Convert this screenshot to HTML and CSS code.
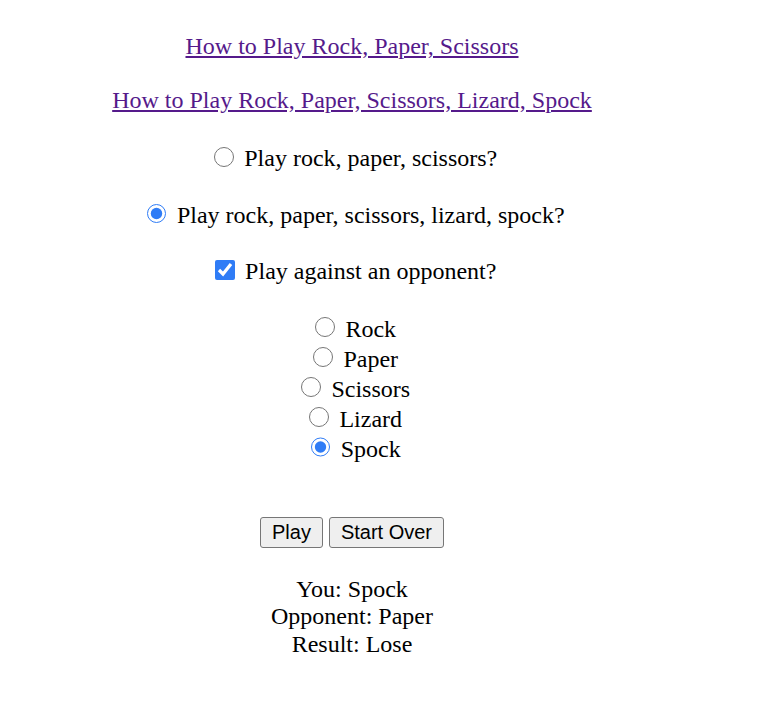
FILE: index.html
```html
<!DOCTYPE html>
<html>
<head>
<meta charset="utf-8">
<title>Rock, Paper, Scissors</title>
<link rel="stylesheet" href="styles.css">
</head>
<body>
<div class="page">
  <div class="link-row first"><a href="#rps">How to Play Rock, Paper, Scissors</a></div>
  <div class="link-row second"><a href="#rpsls">How to Play Rock, Paper, Scissors, Lizard, Spock</a></div>
  <div class="option-row"><input type="radio" name="mode" class="ctl"> Play rock, paper, scissors?</div>
  <div class="option-row"><input type="radio" name="mode" class="ctl" checked> Play rock, paper, scissors, lizard, spock?</div>
  <div class="option-row"><input type="checkbox" class="ctl" checked> Play against an opponent?</div>
  <div class="choices">
    <div class="choice"><input type="radio" name="pick" class="ctl"> Rock</div>
    <div class="choice"><input type="radio" name="pick" class="ctl"> Paper</div>
    <div class="choice"><input type="radio" name="pick" class="ctl"> Scissors</div>
    <div class="choice"><input type="radio" name="pick" class="ctl"> Lizard</div>
    <div class="choice"><input type="radio" name="pick" class="ctl" checked> Spock</div>
  </div>
  <div class="buttons"><button class="btn">Play</button> <button class="btn">Start Over</button></div>
  <div class="results">
    <div class="result-line">You: Spock</div>
    <div class="result-line">Opponent: Paper</div>
    <div class="result-line">Result: Lose</div>
  </div>
</div>
</body>
</html>
```
FILE: styles.css
```css
html, body {
  margin: 0;
  padding: 0;
  background: #ffffff;
}
body {
  font-family: "Liberation Serif", "Times New Roman", serif;
  font-size: 24px;
  color: #000000;
}
.page {
  width: 704px;
  padding-top: 32px;
  text-align: center;
}
.link-row {
  line-height: 28px;
}
.link-row a {
  color: #551a8b;
  text-decoration: underline;
}
.link-row.first {
  margin-bottom: 25.5px;
}
.link-row.second {
  margin-bottom: 30.5px;
}
.option-row {
  line-height: 28px;
  margin-bottom: 28.5px;
}
.ctl {
  width: 19.5px;
  height: 19.5px;
  margin: 0 4.5px 0 7.5px;
  vertical-align: baseline;
  accent-color: #2f7cf6;
}
.option-row .ctl {
  position: relative;
  top: 0.5px;
}
.choices {
  margin-top: 3.5px;
}
.choice {
  line-height: 30px;
}
.buttons {
  margin-top: 53px;
  height: 31px;
  line-height: 31px;
}
.btn {
  height: 31px;
  padding: 0 11px;
  border: 1px solid #767676;
  border-radius: 3px;
  background: #efefef;
  color: #000000;
  font-family: "Liberation Sans", Arial, sans-serif;
  font-size: 20px;
  vertical-align: top;
}
.results {
  margin-top: 28px;
}
.result-line {
  line-height: 27.5px;
}
```
